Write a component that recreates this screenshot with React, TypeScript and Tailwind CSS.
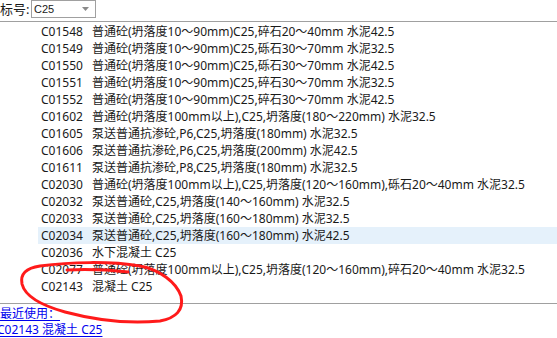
const rows: [string, string][] = [
  ["C01548", "普通砼(坍落度10～90mm)C25,碎石20～40mm 水泥42.5"],
  ["C01549", "普通砼(坍落度10～90mm)C25,砾石30～70mm 水泥32.5"],
  ["C01550", "普通砼(坍落度10～90mm)C25,砾石30～70mm 水泥42.5"],
  ["C01551", "普通砼(坍落度10～90mm)C25,碎石30～70mm 水泥32.5"],
  ["C01552", "普通砼(坍落度10～90mm)C25,碎石30～70mm 水泥42.5"],
  ["C01602", "普通砼(坍落度100mm以上),C25,坍落度(180～220mm) 水泥32.5"],
  ["C01605", "泵送普通抗渗砼,P6,C25,坍落度(180mm) 水泥32.5"],
  ["C01606", "泵送普通抗渗砼,P6,C25,坍落度(200mm) 水泥42.5"],
  ["C01611", "泵送普通抗渗砼,P8,C25,坍落度(180mm) 水泥32.5"],
  ["C02030", "普通砼(坍落度100mm以上),C25,坍落度(120～160mm),砾石20～40mm 水泥32.5"],
  ["C02032", "泵送普通砼,C25,坍落度(140～160mm) 水泥32.5"],
  ["C02033", "泵送普通砼,C25,坍落度(160～180mm) 水泥32.5"],
  ["C02034", "泵送普通砼,C25,坍落度(160～180mm) 水泥42.5"],
  ["C02036", "水下混凝土 C25"],
  ["C02077", "普通砼(坍落度100mm以上),C25,坍落度(120～160mm),碎石20～40mm 水泥32.5"],
  ["C02143", "混凝土 C25"],
];

const font = { fontFamily: '"Noto Sans", "Noto Sans CJK SC", sans-serif' };

export default function App() {
  return (
    <div
      className="relative w-[557px] h-[338px] bg-white text-[12px] text-[#1a1a1a] overflow-hidden"
      style={font}
    >
      {/* top filter */}
      <div className="flex items-center h-[21px] pb-[3px]">
        <span className="w-[31px] leading-[18px] text-[13px]">标号:</span>
        <div className="flex items-center justify-between w-[65px] h-[18px] border border-[#a0a0a0] pl-[2px] pr-[6px] text-[11px]">
          <span className="font-['Liberation_Sans',sans-serif]">C25</span>
          <svg width="7" height="4" viewBox="0 0 7 4">
            <path d="M0 0h7L3.5 4z" fill="#8a8a8a" />
          </svg>
        </div>
      </div>
      <div className="h-px bg-[#a0a0a0]" />

      {/* list */}
      <div className="flex flex-col pt-px h-[281px]">
        {rows.map(([code, desc]) => (
          <div
            key={code}
            className={`flex items-center h-[17px] ml-[38px] pl-[3px] whitespace-nowrap ${
              code === "C02034" ? "bg-[#e5f1fb]" : ""
            }`}
          >
            <span className="w-[51px]">{code}</span>
            <span>{desc}</span>
          </div>
        ))}
      </div>

      <div className="h-px bg-[#a0a0a0]" />
      <div className="flex flex-col text-[#0000ee] leading-[16px] pt-[2px]">
        <span className="underline underline-offset-2 w-fit">最近使用：</span>
        <span className="underline underline-offset-2 w-fit -ml-[3px]">C02143 混凝土 C25</span>
      </div>

      {/* red hand-drawn annotation */}
      <svg
        className="absolute left-0 top-0 pointer-events-none"
        width="557"
        height="338"
        viewBox="0 0 557 338"
      >
        <path
          d="M67 270 C90 269 110 270 128 272 M40 266 C70 262 110 261 140 266 C160 270 176 282 181 296 C184 310 176 318 160 321 C130 324 95 320 65 312 C40 305 25 296 22 284 C20 274 26 268 40 266"
          fill="none"
          stroke="#ff1a1a"
          strokeWidth="3"
          strokeLinecap="round"
        />
      </svg>
    </div>
  );
}
